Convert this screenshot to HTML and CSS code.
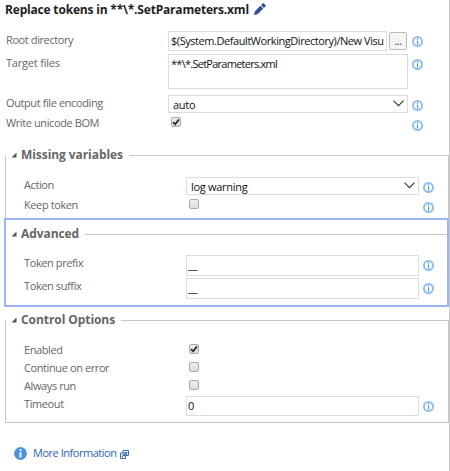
FILE: index.html
```html
<!DOCTYPE html>
<html lang="en">
<head>
<meta charset="utf-8">
<title>Replace tokens</title>
<link rel="stylesheet" href="styles.css">
</head>
<body>
<svg class="defs" aria-hidden="true">
  <symbol id="info" viewBox="0 0 11 11"><circle cx="5.5" cy="5.5" r="4.5" fill="#fff" stroke="#8fc0ec" stroke-width="2"/><path d="M5.5 2.6v1.2M5.5 4.5v4" stroke="#4d8fd0" stroke-width="1.2"/></symbol>
  <symbol id="check" viewBox="0 0 10 10"><path d="M2 5.2 4.1 7.3 8 2.3" fill="none" stroke="#333" stroke-width="1.9"/></symbol>
  <symbol id="chevron" viewBox="0 0 11 7"><path d="M.5.6 5.5 5.6 10.5.6" fill="none" stroke="#333" stroke-width="1.1"/></symbol>
  <symbol id="triangle" viewBox="0 0 6 6"><path d="M5.5 .5v5H.5z" fill="#555"/></symbol>
</svg>
<main class="panel">
  <h1 class="title"><span>Replace tokens in **\*.SetParameters.xml</span><svg class="pencil" viewBox="0 0 12 12"><path d="M0 12 .8 8.4 6.4 2.8 9.2 5.6 3.6 11.2zM7.1 2.1 8.6.6Q9.3 0 10 .6L11.4 2Q12 2.7 11.4 3.4L9.9 4.9z" fill="#2f4b9c"/></svg></h1>

  <section class="general">
    <div class="row r-root"><label class="label">Root directory</label><div class="input path"><span>$(System.DefaultWorkingDirectory)/New Visu</span></div><button class="browse">...</button><svg class="info"><use href="#info"/></svg></div>
    <div class="row r-files"><label class="label t-files">Target files</label><div class="input area"><span>**\*.SetParameters.xml</span></div><svg class="info"><use href="#info"/></svg></div>
    <div class="row r-select"><label class="label">Output file encoding</label><div class="input select"><span>auto</span><svg class="chevron"><use href="#chevron"/></svg></div><svg class="info"><use href="#info"/></svg></div>
    <div class="row r-check"><label class="label">Write unicode BOM</label><span class="box"><svg><use href="#check"/></svg></span><svg class="info"><use href="#info"/></svg></div>
  </section>

  <section class="group missing">
    <h2 class="legend"><svg class="tri"><use href="#triangle"/></svg><span>Missing variables</span></h2>
    <div class="row r-select"><label class="label">Action</label><div class="input select"><span>log warning</span><svg class="chevron"><use href="#chevron"/></svg></div><svg class="info"><use href="#info"/></svg></div>
    <div class="row r-check"><label class="label">Keep token</label><span class="box"></span><svg class="info"><use href="#info"/></svg></div>
  </section>

  <section class="group advanced">
    <h2 class="legend"><svg class="tri"><use href="#triangle"/></svg><span>Advanced</span></h2>
    <div class="row r-token"><label class="label">Token prefix</label><div class="input"><span>__</span></div><svg class="info"><use href="#info"/></svg></div>
    <div class="row r-token"><label class="label">Token suffix</label><div class="input"><span>__</span></div><svg class="info"><use href="#info"/></svg></div>
  </section>

  <section class="group control">
    <h2 class="legend"><svg class="tri"><use href="#triangle"/></svg><span>Control Options</span></h2>
    <div class="row r-option"><label class="label">Enabled</label><span class="box"><svg><use href="#check"/></svg></span></div>
    <div class="row r-option"><label class="label">Continue on error</label><span class="box"></span></div>
    <div class="row r-option"><label class="label">Always run</label><span class="box"></span></div>
    <div class="row r-timeout"><label class="label">Timeout</label><div class="input"><span>0</span></div><svg class="info"><use href="#info"/></svg></div>
  </section>

  <a class="more"><svg class="more-icon" viewBox="0 0 13 13"><circle cx="6.5" cy="6.5" r="6.4" fill="#4b93e0"/><path d="M6.5 2.3v1.8M6.5 5.2v5.3" stroke="#fff" stroke-width="1.9"/></svg><span>More Information</span><svg class="external" viewBox="0 0 9 9"><path d="M3 .5h5.5v5H3zM3 3H.5v5.5h5V6" fill="#fff" stroke="#3b6fb5"/><path d="M2 7 6 3M3.6 2.5h3v3" fill="none" stroke="#3b6fb5" stroke-width="1.2"/></svg></a>
</main>
</body>
</html>
```

FILE: styles.css
```css
* { box-sizing: border-box; }
body { margin: 0; background: #fff; font: 11px/18px "Open Sans", "Liberation Sans", sans-serif; letter-spacing: -.4px; color: #666; }
.defs { position: absolute; width: 0; height: 0; }
.panel { height: 471px; width: 450px; border-right: 1px solid #c8c8c8; overflow: hidden; }
.title { margin: 0; height: 31px; padding-left: 5px; display: flex; font-size: 12px; line-height: 19px; font-weight: 700; color: #222; white-space: nowrap; letter-spacing: -.19px; }
.pencil { width: 12px; height: 12px; margin: 3px 0 0 5px; }
.row { display: flex; align-items: flex-start; white-space: nowrap; }
.label { width: 162px; flex: none; }
.t-files { letter-spacing: -.2px; }
.general { padding-left: 6px; height: 124px; }
.input { width: 240px; height: 20px; flex: none; border: 1px solid #ddd; background: #fff; color: #111; padding: 0 2px 0 1px; }
.group .input { width: 233px; }
.path { width: 219px; padding: 0 0 0 2px; letter-spacing: -.44px; }
.area { height: 35px; padding-left: 2px; letter-spacing: -.74px; }
.select { height: 18px; line-height: 17px; display: flex; justify-content: space-between; padding: 0 3px 0 4px; letter-spacing: -.3px; }
.chevron { width: 11px; height: 7px; margin-top: 4px; }
.browse { width: 18px; height: 18px; margin: 1px 0 0 2px; padding: 0; border: 1px solid #bbb; border-radius: 2px; background: #f5f5f5; font: 10px/14px "Open Sans", sans-serif; color: #222; letter-spacing: -.3px; }
.info { width: 11px; height: 11px; flex: none; margin: 5px 0 0 4px; }
.r-root { height: 23px; }
.r-root .info { margin-left: 5px; }
.r-files { height: 41px; }
.r-select, .r-check { height: 19px; }
.general .r-select .label { margin-top: -1px; }
.missing .r-select .label { margin-top: -1px; }
.box { width: 10px; height: 10px; flex: none; margin: 3px 0 0 3px; border: 1px solid #aaa; border-radius: 2px; background: linear-gradient(#eee, #ddd); display: flex; }
.box svg { width: 10px; height: 10px; margin: -1px; flex: none; }
.r-check .info { margin: 6px 26px 0 auto; }
.group { display: flow-root; position: relative; margin-left: 5px; width: 444px; border: 1px solid #c8c8c8; border-top: 0; }
.legend { margin: -9px 0 0 5px; display: flex; align-items: center; font-size: 12px; line-height: 18px; font-weight: 700; color: #666; letter-spacing: -.07px; }
.legend::after { content: ""; flex: 1; height: 1px; background: #c8c8c8; margin-left: 6px; }
.tri { width: 6px; height: 6px; margin-right: 4px; }
.group .row { padding-left: 18px; }
.group .r-check .info { margin-right: 14px; }
.missing { height: 64px; }
.missing .legend { margin-bottom: 13px; }
.advanced { margin-top: 15px; height: 72px; border-color: transparent; }
.advanced::before { content: ""; position: absolute; inset: -16px -1px -2px -2px; border: 2px solid #9ab4f5; }
.advanced .legend { margin-bottom: 12px; }
.r-token { height: 23px; }
.r-token .input { height: 21px; }
.r-token .label, .r-timeout .label { margin-top: -1px; }
.control { margin-top: 14px; height: 103px; }
.control .legend { margin-bottom: 12px; }
.r-option { height: 18px; }
.r-timeout { margin-top: 1px; }
.more { display: flex; padding: 21px 0 0 14px; color: #2b66b5; white-space: nowrap; letter-spacing: -.47px; }
.more-icon { width: 13px; height: 13px; margin: 3px 6px 0 0; }
.external { width: 9px; height: 9px; margin: 6px 0 0 3px; }
```
